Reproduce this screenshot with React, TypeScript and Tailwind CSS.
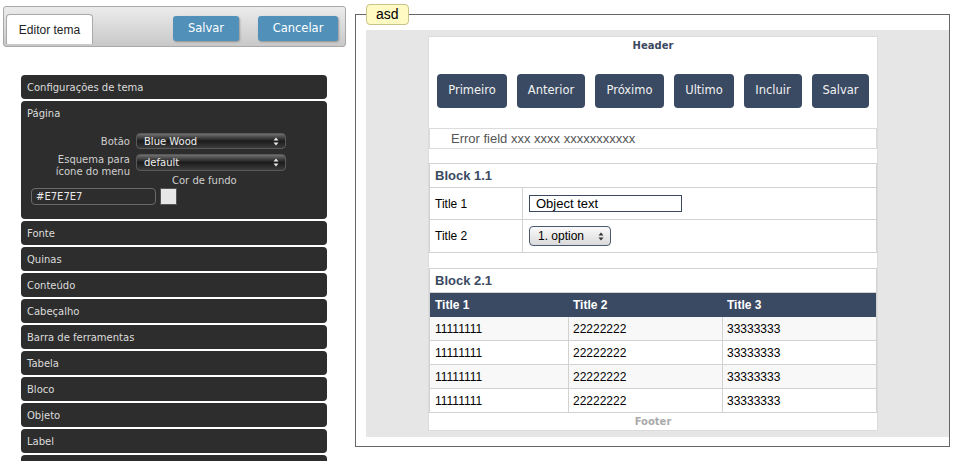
import React from "react";

const dv = "font-['DejaVu_Sans',sans-serif]";
const ar = "font-['Liberation_Sans',Arial,sans-serif]";

// last one is cut off by the window, so no label shows
const sections = [
    "Fonte",
    "Quinas",
    "Conteúdo",
    "Cabeçalho",
    "Barra de ferramentas",
    "Tabela",
    "Bloco",
    "Objeto",
    "Label",
    "",
];

const navButtons = [
    { label: "Primeiro", w: "w-[70px]" },
    { label: "Anterior", w: "w-[68px]" },
    { label: "Próximo", w: "w-[69px]" },
    { label: "Ultimo", w: "w-[60px]" },
    { label: "Incluir", w: "w-[58px]" },
    { label: "Salvar", w: "w-[57px]" },
];

function Arrows({ color }: { color: string }) {
    return (
        <svg width="6" height="9" viewBox="0 0 6 9" className="shrink-0">
            <path d="M3 0.5 L5.5 3.5 H0.5 Z" fill={color} />
            <path d="M3 8.5 L5.5 5.5 H0.5 Z" fill={color} />
        </svg>
    );
}

function DarkSelect({ value, h }: { value: string; h: string }) {
    return (
        <div
            className={`${h} w-[150px] rounded-[4px] border border-[#5a5a5a] bg-gradient-to-b from-[#707070] via-[#1c1c1c] to-[#3c3c3c] flex items-center justify-between pl-[7px] pr-[6px] text-[10px] text-[#f0f0f0]`}
        >
            <span>{value}</span>
            <Arrows color="#e8e8e8" />
        </div>
    );
}

export default function App() {
    return (
        <div className="w-[956px] h-[461px] overflow-hidden bg-white flex">
            {/* Left: theme editor */}
            <div className="w-[355px] shrink-0 pt-[6px]">
                <div className="ml-[3px] w-[343px] h-[41px] rounded-[3px] border border-[#a9a9a9] bg-gradient-to-b from-[#ececec] to-[#c8c8c8] flex items-start pl-[2px] pt-[7px]">
                    <div className={`${ar} w-[87px] h-[30px] bg-white border border-b-0 border-[#aaa] rounded-t-[4px] flex items-center justify-center text-[12px] text-[#222]`}>
                        Editor tema
                    </div>
                    <button className={`${dv} ml-[80px] mt-[2px] w-[66px] h-[25px] rounded-[3px] bg-[#5090b9] text-white text-[11.5px] shadow-[1px_1px_2px_rgba(0,0,0,0.3)]`}>
                        Salvar
                    </button>
                    <button className={`${dv} ml-[19px] mt-[2px] w-[80px] h-[25px] rounded-[3px] bg-[#5090b9] text-white text-[11.5px] shadow-[1px_1px_2px_rgba(0,0,0,0.3)]`}>
                        Cancelar
                    </button>
                </div>

                <div className={`${dv} ml-[21px] mt-[28px] w-[306px] flex flex-col gap-[2px] text-[10px] text-[#dcdcdc]`}>
                    <div className="h-[24px] rounded-[4px] bg-[#2d2d2d] flex items-center pl-[6px]">Configurações de tema</div>

                    {/* Página (open) */}
                    <div className="h-[118px] rounded-[4px] bg-[#2d2d2d]">
                        <div className="h-[24px] flex items-center pl-[6px]">Página</div>
                        <div className="mt-[8px] grid grid-cols-[109px_150px] gap-x-[6px] gap-y-[5px] items-start">
                            <div className="h-[16px] flex items-center justify-end text-[#cfcfcf]">Botão</div>
                            <DarkSelect value="Blue Wood" h="h-[16px]" />
                            <div className="h-[21px] text-right leading-[12px] text-[#cfcfcf]">
                                Esquema para
                                <br />
                                ícone do menu
                            </div>
                            <DarkSelect value="default" h="h-[17px]" />
                        </div>
                        <div className="pl-[151px] leading-[12px] text-[#cfcfcf]">Cor de fundo</div>
                        <div className="mt-[1px] pl-[10px] flex gap-[4px]">
                            <div className="w-[125px] h-[17px] rounded-[4px] border border-[#6a6a6a] flex items-center pl-[4px] text-[#e8e8e8]">
                                #E7E7E7
                            </div>
                            <div className="w-[17px] h-[17px] bg-[#e7e7e7] border border-[#555]" />
                        </div>
                    </div>

                    {sections.map((s, i) => (
                        <div key={i} className="h-[24px] rounded-[4px] bg-[#2d2d2d] flex items-center pl-[6px] shrink-0">
                            {s}
                        </div>
                    ))}
                </div>
            </div>

            {/* Right: preview */}
            <div className="relative mt-[14px] w-[595px] h-[433px] border border-[#666] pl-[10px] pt-[15px] shrink-0">
                <div className={`${ar} absolute left-[10px] top-[-11px] h-[21px] px-[9px] rounded-[4px] border border-[#c9c28a] bg-[#fff9c4] flex items-center text-[14px] text-black`}>
                    asd
                </div>

                <div className="w-[583px] h-[407px] bg-[#e6e6e6] pt-[6px] pl-[62px]">
                    <div className="w-[450px] h-[395px] bg-white border border-[#dcdcdc] flex flex-col">
                        <div className={`${dv} h-[19px] flex items-center justify-center text-[10px] font-bold text-[#3a4a62]`}>Header</div>

                        <div className="mt-[20px] pl-[8px] flex gap-[10px]">
                            {navButtons.map((b) => (
                                <div
                                    key={b.label}
                                    className={`${dv} ${b.w} h-[34px] rounded-[4px] bg-[#3a4a62] text-[#f2f2f2] text-[11.5px] flex items-center justify-center`}
                                >
                                    {b.label}
                                </div>
                            ))}
                        </div>

                        <div className={`${ar} mt-[20px] h-[21px] border border-[#dcdcdc] flex items-center pl-[21px] text-[13px] text-[#555]`}>
                            Error field xxx xxxx xxxxxxxxxxx
                        </div>

                        {/* Block 1.1 */}
                        <div className={`${ar} mt-[14px] border border-[#d2d2d2] text-[12px] text-black`}>
                            <div className="h-[24px] border-b border-[#d2d2d2] flex items-center pl-[5px] text-[13px] font-bold text-[#3a4a62]">
                                Block 1.1
                            </div>
                            <div className="h-[32px] border-b border-[#d2d2d2] flex">
                                <div className="w-[93px] border-r border-[#d2d2d2] flex items-center pl-[5px]">Title 1</div>
                                <div className="flex items-center pl-[6px]">
                                    <div className="w-[153px] h-[17px] border border-[#3a4a62] flex items-center pl-[6px] text-[13px]">
                                        Object text
                                    </div>
                                </div>
                            </div>
                            <div className="h-[32px] flex">
                                <div className="w-[93px] border-r border-[#d2d2d2] flex items-center pl-[5px]">Title 2</div>
                                <div className="flex items-center pl-[6px]">
                                    <div className="w-[82px] h-[20px] rounded-[4px] border border-[#4a5870] bg-gradient-to-b from-[#fafafa] to-[#dadada] flex items-center justify-between pl-[8px] pr-[6px] text-[12px]">
                                        <span>1. option</span>
                                        <Arrows color="#333" />
                                    </div>
                                </div>
                            </div>
                        </div>

                        {/* Block 2.1 */}
                        <div className={`${ar} mt-[15px] border-t border-x border-[#d2d2d2] text-[12px] text-black`}>
                            <div className="h-[24px] border-b border-[#d2d2d2] flex items-center pl-[5px] text-[13px] font-bold text-[#3a4a62]">
                                Block 2.1
                            </div>
                            <div className="h-[24px] bg-[#3a4a62] grid grid-cols-[139px_154px_1fr] font-bold text-white">
                                <div className="flex items-center pl-[5px]">Title 1</div>
                                <div className="flex items-center pl-[4px]">Title 2</div>
                                <div className="flex items-center pl-[4px]">Title 3</div>
                            </div>
                            {[0, 1, 2, 3].map((i) => (
                                <div
                                    key={i}
                                    className={`h-[24px] border-b border-[#d2d2d2] grid grid-cols-[139px_154px_1fr] ${i % 2 === 0 ? "bg-[#f8f8f8]" : "bg-white"}`}
                                >
                                    <div className="flex items-center pl-[5px] border-r border-[#d2d2d2]">11111111</div>
                                    <div className="flex items-center pl-[4px] border-r border-[#d2d2d2]">22222222</div>
                                    <div className="flex items-center pl-[4px]">33333333</div>
                                </div>
                            ))}
                        </div>
                        <div className={`${dv} h-[19px] flex items-center justify-center text-[10px] font-bold text-[#aaa]`}>Footer</div>
                    </div>
                </div>
            </div>
        </div>
    );
}
